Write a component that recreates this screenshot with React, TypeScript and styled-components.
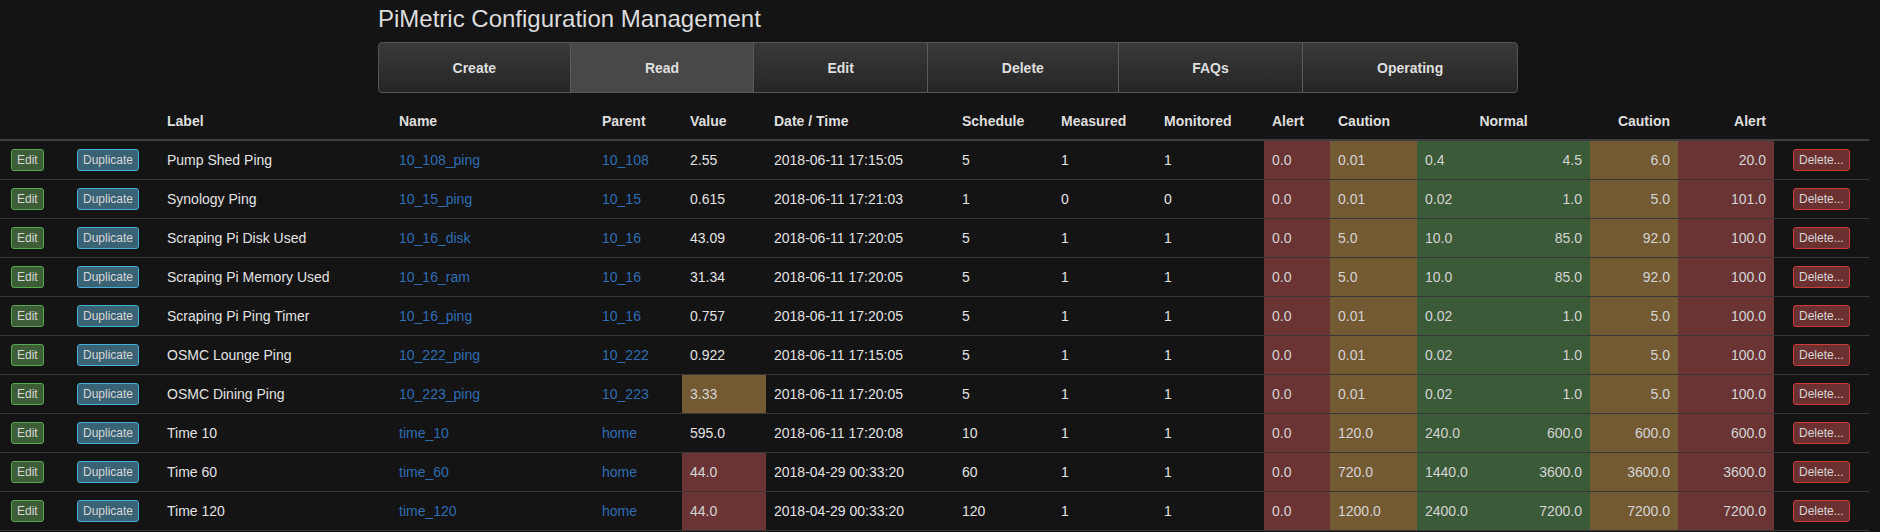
import React from "react";
import styled, { createGlobalStyle } from "styled-components";

const GlobalStyle = createGlobalStyle`
  body {
    margin: 0;
    background: #141414;
    color: #e0e0e0;
    font-family: "Liberation Sans", Arial, sans-serif;
    font-size: 14px;
    line-height: 20px;
  }
`;

type Band = "alert" | "caution" | "normal" | undefined;

const bandColors: Record<string, string> = {
  alert: "#6a3434",
  caution: "#745a33",
  normal: "#3b5a37",
};

type Row = {
  label: string;
  name: string;
  parent: string;
  value: string;
  valueBand?: Band;
  time: string;
  schedule: string;
  measured: string;
  monitored: string;
  limits: string[];
};

const rows: Row[] = [
  { label: "Pump Shed Ping", name: "10_108_ping", parent: "10_108", value: "2.55", time: "2018-06-11 17:15:05", schedule: "5", measured: "1", monitored: "1", limits: ["0.0", "0.01", "0.4", "4.5", "6.0", "20.0"] },
  { label: "Synology Ping", name: "10_15_ping", parent: "10_15", value: "0.615", time: "2018-06-11 17:21:03", schedule: "1", measured: "0", monitored: "0", limits: ["0.0", "0.01", "0.02", "1.0", "5.0", "101.0"] },
  { label: "Scraping Pi Disk Used", name: "10_16_disk", parent: "10_16", value: "43.09", time: "2018-06-11 17:20:05", schedule: "5", measured: "1", monitored: "1", limits: ["0.0", "5.0", "10.0", "85.0", "92.0", "100.0"] },
  { label: "Scraping Pi Memory Used", name: "10_16_ram", parent: "10_16", value: "31.34", time: "2018-06-11 17:20:05", schedule: "5", measured: "1", monitored: "1", limits: ["0.0", "5.0", "10.0", "85.0", "92.0", "100.0"] },
  { label: "Scraping Pi Ping Timer", name: "10_16_ping", parent: "10_16", value: "0.757", time: "2018-06-11 17:20:05", schedule: "5", measured: "1", monitored: "1", limits: ["0.0", "0.01", "0.02", "1.0", "5.0", "100.0"] },
  { label: "OSMC Lounge Ping", name: "10_222_ping", parent: "10_222", value: "0.922", time: "2018-06-11 17:15:05", schedule: "5", measured: "1", monitored: "1", limits: ["0.0", "0.01", "0.02", "1.0", "5.0", "100.0"] },
  { label: "OSMC Dining Ping", name: "10_223_ping", parent: "10_223", value: "3.33", valueBand: "caution", time: "2018-06-11 17:20:05", schedule: "5", measured: "1", monitored: "1", limits: ["0.0", "0.01", "0.02", "1.0", "5.0", "100.0"] },
  { label: "Time 10", name: "time_10", parent: "home", value: "595.0", time: "2018-06-11 17:20:08", schedule: "10", measured: "1", monitored: "1", limits: ["0.0", "120.0", "240.0", "600.0", "600.0", "600.0"] },
  { label: "Time 60", name: "time_60", parent: "home", value: "44.0", valueBand: "alert", time: "2018-04-29 00:33:20", schedule: "60", measured: "1", monitored: "1", limits: ["0.0", "720.0", "1440.0", "3600.0", "3600.0", "3600.0"] },
  { label: "Time 120", name: "time_120", parent: "home", value: "44.0", valueBand: "alert", time: "2018-04-29 00:33:20", schedule: "120", measured: "1", monitored: "1", limits: ["0.0", "1200.0", "2400.0", "7200.0", "7200.0", "7200.0"] },
];

const limitBands: Band[] = ["alert", "caution", "normal", "normal", "caution", "alert"];

const navItems = [
  { label: "Create", width: 191 },
  { label: "Read", width: 184, active: true },
  { label: "Edit", width: 174 },
  { label: "Delete", width: 191 },
  { label: "FAQs", width: 185 },
  { label: "Operating", width: 215 },
];

const colWidths = [69, 90, 232, 203, 88, 84, 188, 99, 103, 108, 66, 87, 86, 87, 88, 96, 95];

export default function App() {
  return (
    <>
      <GlobalStyle />
      <Header>
        <Title>PiMetric Configuration Management</Title>
        <Nav>
          {navItems.map((item) => (
            <NavItem key={item.label} $active={item.active} style={{ width: item.width }}>
              {item.label}
            </NavItem>
          ))}
        </Nav>
      </Header>
      <Table>
        <colgroup>
          {colWidths.map((w, i) => (
            <col key={i} style={{ width: w }} />
          ))}
        </colgroup>
        <thead>
          <tr>
            <Th />
            <Th />
            <Th>Label</Th>
            <Th>Name</Th>
            <Th>Parent</Th>
            <Th>Value</Th>
            <Th>Date / Time</Th>
            <Th>Schedule</Th>
            <Th>Measured</Th>
            <Th>Monitored</Th>
            <Th>Alert</Th>
            <Th>Caution</Th>
            <Th colSpan={2} $align="center">Normal</Th>
            <Th $align="right">Caution</Th>
            <Th $align="right">Alert</Th>
            <Th />
          </tr>
        </thead>
        <tbody>
          {rows.map((r) => (
            <Tr key={r.name}>
              <ButtonCell $pad={11}>
                <SmallButton $kind="edit">Edit</SmallButton>
              </ButtonCell>
              <ButtonCell $pad={8}>
                <SmallButton $kind="dup">Duplicate</SmallButton>
              </ButtonCell>
              <Td>{r.label}</Td>
              <Td>
                <Link href="#">{r.name}</Link>
              </Td>
              <Td>
                <Link href="#">{r.parent}</Link>
              </Td>
              <Td $band={r.valueBand}>{r.value}</Td>
              <Td>{r.time}</Td>
              <Td>{r.schedule}</Td>
              <Td>{r.measured}</Td>
              <Td>{r.monitored}</Td>
              {r.limits.map((v, i) => (
                <Td key={i} $band={limitBands[i]} $align={i >= 3 ? "right" : "left"}>
                  {v}
                </Td>
              ))}
              <ButtonCell $pad={19}>
                <SmallButton $kind="delete">Delete...</SmallButton>
              </ButtonCell>
            </Tr>
          ))}
        </tbody>
      </Table>
    </>
  );
}

const Header = styled.div`
  width: 1140px;
  margin-left: 378px;
  padding-top: 6px;
`;

const Title = styled.h3`
  margin: 0 0 10px;
  font-size: 24px;
  font-weight: 400;
  line-height: 26px;
  color: #dcdcdc;
`;

const Nav = styled.div`
  display: flex;
  height: 51px;
  box-sizing: border-box;
  border: 1px solid #555;
  border-radius: 4px;
  overflow: hidden;
  background: linear-gradient(#393939, #262626);
`;

const NavItem = styled.div<{ $active?: boolean }>`
  display: flex;
  align-items: center;
  justify-content: center;
  box-sizing: border-box;
  font-weight: 700;
  font-size: 14px;
  color: #dedede;
  background: ${(p) => (p.$active ? "#484848" : "transparent")};
  & + & {
    border-left: 1px solid #5a5a5a;
  }
`;

const Table = styled.table`
  margin-top: 10px;
  width: 1869px;
  table-layout: fixed;
  border-collapse: collapse;
`;

const Th = styled.th<{ $align?: string }>`
  padding: 8px;
  text-align: ${(p) => p.$align || "left"};
  font-weight: 700;
  font-size: 14px;
  color: #dedede;
  border-bottom: 2px solid #3f3f3f;
  white-space: nowrap;
`;

const Tr = styled.tr`
  border-bottom: 1px solid #383838;
`;

const Td = styled.td<{ $band?: Band; $align?: string }>`
  padding: 8px;
  height: 22px;
  text-align: ${(p) => p.$align || "left"};
  white-space: nowrap;
  color: ${(p) => (p.$band ? "#d4d4d4" : "#e2e2e2")};
  background: ${(p) => (p.$band ? bandColors[p.$band] : "transparent")};
`;

const ButtonCell = styled.td<{ $pad: number }>`
  padding: 8px 0 8px ${(p) => p.$pad}px;
  height: 22px;
`;

const buttonColors = {
  edit: { bg: "#3d5d36", border: "#55a84f" },
  dup: { bg: "#3a6275", border: "#43b0d4" },
  delete: { bg: "#6b3131", border: "#cc3b37" },
};

const SmallButton = styled.button<{ $kind: "edit" | "dup" | "delete" }>`
  display: block;
  height: 22px;
  padding: 1px 5px;
  font-family: "Liberation Sans", Arial, sans-serif;
  font-size: 12px;
  line-height: 18px;
  color: #d6d6d6;
  border-radius: 3px;
  border: 1px solid ${(p) => buttonColors[p.$kind].border};
  background: ${(p) => buttonColors[p.$kind].bg};
  cursor: pointer;
`;

const Link = styled.a`
  color: #2f6db3;
  text-decoration: none;
`;
